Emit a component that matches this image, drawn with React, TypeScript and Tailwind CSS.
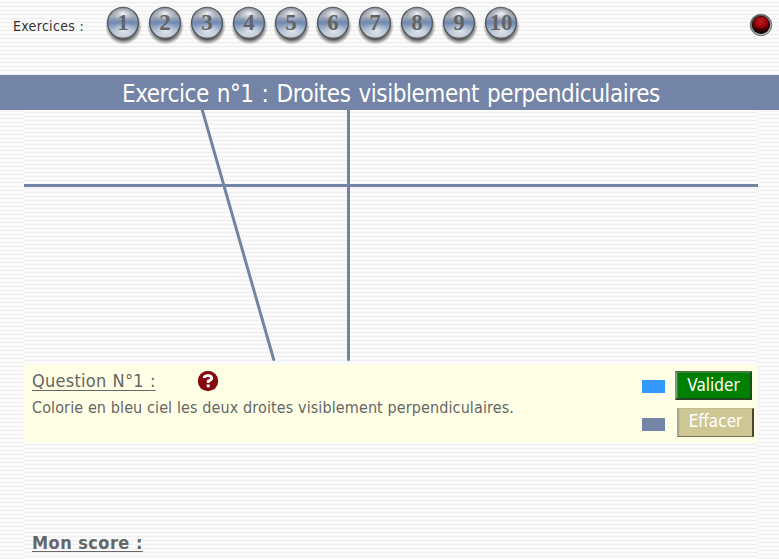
const NUMBERS = [1, 2, 3, 4, 5, 6, 7, 8, 9, 10];
const FONT = "[font-family:'DejaVu_Sans_Condensed','DejaVu_Sans',sans-serif] [font-stretch:condensed]";
const STRIPES =
  "bg-[#fbfbfb] bg-[repeating-linear-gradient(to_bottom,#fdfdfd_0px,#fdfdfd_1px,#f8f8f8_1px,#f8f8f8_2px,#f0f0f0_2px,#f0f0f0_3px,#f8f8f8_3px,#f8f8f8_4px)]";

function Sphere({ n }: { n: number }) {
  return (
    <svg width="42" height="46" viewBox="0 0 42 46" className="shrink-0">
      <defs>
        <linearGradient id={`g${n}`} x1="0" y1="0" x2="0" y2="1">
          <stop offset="0" stopColor="#74777d" />
          <stop offset="0.3" stopColor="#a3abb8" />
          <stop offset="0.5" stopColor="#7188b0" />
          <stop offset="0.75" stopColor="#a9bbd0" />
          <stop offset="1" stopColor="#cbd0d5" />
        </linearGradient>
        <radialGradient id={`h${n}`}>
          <stop offset="0" stopColor="#f4f4f4" />
          <stop offset="1" stopColor="#dce0e8" stopOpacity="0" />
        </radialGradient>
        <radialGradient id={`s${n}`}>
          <stop offset="0.7" stopColor="#333" stopOpacity="0.9" />
          <stop offset="1" stopColor="#666" stopOpacity="0" />
        </radialGradient>
      </defs>
      <circle cx="21.5" cy="25.2" r="18.5" fill={`url(#s${n})`} />
      <circle cx="21" cy="21.7" r="15.4" fill={`url(#g${n})`} stroke="#50545b" strokeWidth="1.3" />
      <ellipse cx="21" cy="12.5" rx="12" ry="7" fill={`url(#h${n})`} />
      <ellipse cx="22" cy="30" rx="13" ry="9" fill={`url(#h${n})`} opacity="0.75" />
      <text x="21" y="28.9" textAnchor="middle" fill="#626467" className="[font-family:'Liberation_Serif',serif] text-[23px] font-bold [font-stretch:normal]">{n}</text>
    </svg>
  );
}

function PowerLight() {
  return (
    <svg width="24" height="24" viewBox="0 0 24 24">
      <defs>
        <linearGradient id="rim" x1="0" y1="0" x2="0.5" y2="1">
          <stop stopColor="#343735" />
          <stop offset="1" stopColor="#b7bbb6" />
        </linearGradient>
        <radialGradient id="red" cx="0.5" cy="0.3" r="0.65">
          <stop stopColor="#c51b20" />
          <stop offset="0.65" stopColor="#8b0006" />
          <stop offset="1" stopColor="#240002" />
        </radialGradient>
      </defs>
      <circle cx="12" cy="12" r="10.8" fill="url(#rim)" stroke="#777b77" />
      <circle cx="12" cy="12" r="9" fill="#120304" />
      <circle cx="12" cy="11.6" r="8.1" fill="url(#red)" />
      <path d="M4.3 14Q12 16 19.7 14Q18 20 12 20T4.3 14Z" fill="#1c0708" opacity="0.4" />
    </svg>
  );
}

export default function App() {
  return (
    <div className={`h-[559px] w-[779px] overflow-hidden text-[#666666] ${STRIPES} ${FONT}`}>
      <header className="flex h-[75px] items-start">
        <span className="w-[102px] pt-[16px] pl-[13px] text-[14px] leading-[20px] tracking-[0.32px] whitespace-nowrap text-[#333]">Exercices :</span>
        <nav className="flex pt-px">
          {NUMBERS.map((n) => <Sphere key={n} n={n} />)}
        </nav>
        <div className="mt-[13px] ml-auto mr-[6px]"><PowerLight /></div>
      </header>
      <h1 className="h-[35px] bg-[#7484a6] pl-[122px] text-[24px] leading-[38px] tracking-[-0.45px] [word-spacing:1.6px] whitespace-nowrap text-white">
        Exercice n°1 : Droites visiblement perpendiculaires
      </h1>
      <main className={`mx-[24px] h-[449px] w-[734px] ${STRIPES}`}>
        <svg width="734" height="254" viewBox="0 0 734 254" className="block" stroke="#7484a6" strokeWidth="3">
          <path d="M0 75.5H734" />
          <path d="M324.5 0V249.5" strokeLinecap="round" />
          <path d="M178 -1L249.7 249.5" strokeLinecap="round" />
        </svg>
        <section className="flex h-[79px] w-[733px] bg-[#ffffe5]">
          <div className="w-[618px] pl-[8px]">
            <div className="flex h-[33px] items-start">
              <h2 className="w-[165px] pt-[5px] text-[18px] leading-[24px] tracking-[0.25px] [word-spacing:0.8px] whitespace-nowrap underline decoration-1 underline-offset-[3px]">Question N°1 :</h2>
              <svg width="22" height="22" viewBox="0 0 22 22" className="mt-[6px]">
                <circle cx="11" cy="11" r="10.2" fill="#850a10" />
                <path d="M7.2 8Q7.3 5.6 11 5.6Q15 5.6 14.7 8.3Q14.5 10 11.2 11V13" fill="none" stroke="white" strokeWidth="2.8" />
                <path d="M9.7 14.5H12.7V17.3H9.7Z" fill="white" />
              </svg>
            </div>
            <p className="text-[16px] leading-[21px] tracking-[0.11px] whitespace-nowrap">Colorie en bleu ciel les deux droites visiblement perpendiculaires.</p>
          </div>
          <div className="flex flex-col gap-[25px] pt-[16px]">
            <i className="h-[13px] w-[23px] bg-[#3399ff]" />
            <i className="h-[13px] w-[23px] bg-[#7484a6]" />
          </div>
          <div className="flex flex-col gap-[8px] pt-[7px] pl-[10px] text-[17px] text-white">
            <button className="h-[29px] w-[77px] border-2 border-t-[#3e7e3e] border-r-[#165016] border-b-[#234323] border-l-[#819781] bg-[#008000] pb-[2px] leading-[22px] shadow-[inset_1px_0_#438043]">Valider</button>
            <button className="ml-[2px] h-[29px] w-[77px] border-t border-r-2 border-b border-l-2 border-t-[#c5bd8d] border-r-[#4a452e] border-b-[#77745e] border-l-[#a6a696] bg-[#cec693] pb-[2px] leading-[25px] shadow-[inset_1px_0_#c3c0a2]">Effacer</button>
          </div>
        </section>
        <h3 className="pt-[88px] pl-[8px] text-[18px] leading-[24px] font-bold tracking-[0.45px] whitespace-nowrap underline decoration-1 underline-offset-[2px]">Mon score :</h3>
      </main>
    </div>
  );
}
